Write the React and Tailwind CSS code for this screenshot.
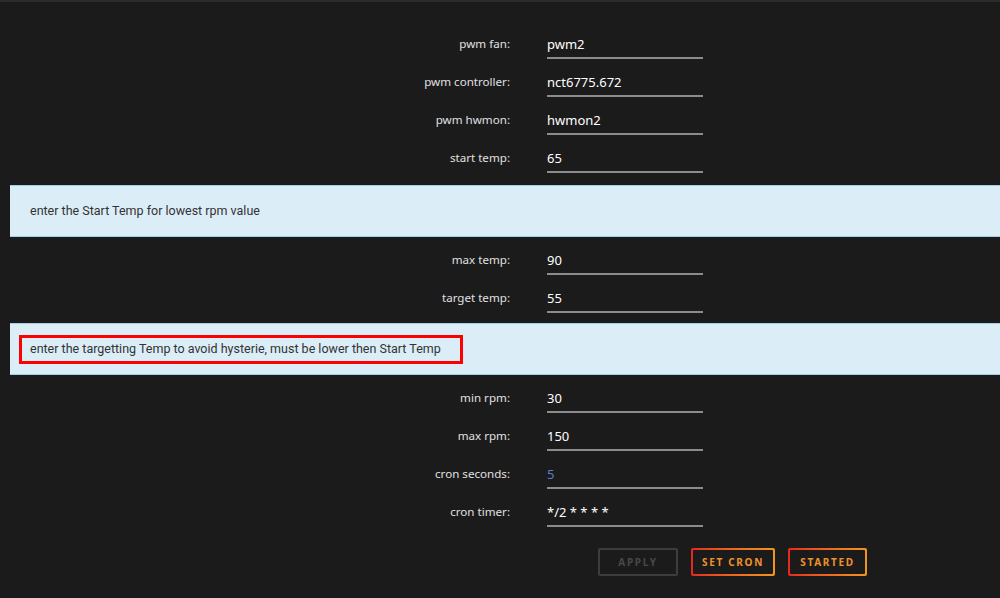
import React from "react";

const Row = ({ label, value, blue }) => (
  <div className="flex h-[38px] items-start">
    <div className="w-[510px] pt-[9px] text-right text-[11.6px] leading-[16px] text-[#e0e0e0]">
      {label}
    </div>
    <div
      className={`ml-[37px] h-[32px] w-[156px] border-b-2 border-[#8c8c8c] pt-[9px] text-[13px] leading-[16px] ${
        blue ? "text-[#5a7ec2]" : "text-white"
      }`}
    >
      {value}
    </div>
  </div>
);

const Info = ({ children, className = "" }) => (
  <div
    className={`ml-[10px] flex h-[52px] items-center border-y border-[#a3d0e3] bg-[#dbedf7] text-[12.5px] text-[#333] font-['Roboto',sans-serif] ${className}`}
  >
    {children}
  </div>
);

const GradBtn = ({ children, w }) => (
  <div className={`h-[28px] rounded-[2px] bg-gradient-to-r from-[#e5261f] to-[#f2951f] p-[2px] ${w}`}>
    <div className="flex h-full w-full items-center justify-center rounded-[1px] bg-[#1c1b1c] text-[10px] font-bold tracking-[0.17em] text-[#f0922a]">
      {children}
    </div>
  </div>
);

export default function App() {
  return (
    <div className="h-[598px] w-[1000px] overflow-hidden bg-[#1c1b1c] font-['Noto_Sans',sans-serif]">
      <div className="h-[2px] bg-[#2b2c2c]" />
      <div className="pt-[25px]">
        <Row label="pwm fan:" value="pwm2" />
        <Row label="pwm controller:" value="nct6775.672" />
        <Row label="pwm hwmon:" value="hwmon2" />
        <Row label="start temp:" value="65" />
      </div>
      <Info className="mt-[6px]">
        <span className="pl-[20px]">enter the Start Temp for lowest rpm value</span>
      </Info>
      <div className="mt-[6px]">
        <Row label="max temp:" value="90" />
        <Row label="target temp:" value="55" />
      </div>
      <Info className="mt-[4px]">
        <span className="ml-[9px] flex h-[29px] w-[444px] items-center border-[3px] border-[#ff0000] pl-[8px]">
          enter the targetting Temp to avoid hysterie, must be lower then Start Temp
        </span>
      </Info>
      <div className="mt-[6px]">
        <Row label="min rpm:" value="30" />
        <Row label="max rpm:" value="150" />
        <Row label="cron seconds:" value="5" blue />
        <Row label="cron timer:" value="*/2 * * * *" />
      </div>
      <div className="mt-[15px] flex gap-[13px] pl-[598px]">
        <div className="flex h-[28px] w-[80px] items-center justify-center rounded-[2px] border-2 border-[#3d3d3d] text-[10px] font-bold tracking-[0.17em] text-[#484848]">
          APPLY
        </div>
        <GradBtn w="w-[84px]">SET CRON</GradBtn>
        <GradBtn w="w-[79px]">STARTED</GradBtn>
      </div>
    </div>
  );
}
